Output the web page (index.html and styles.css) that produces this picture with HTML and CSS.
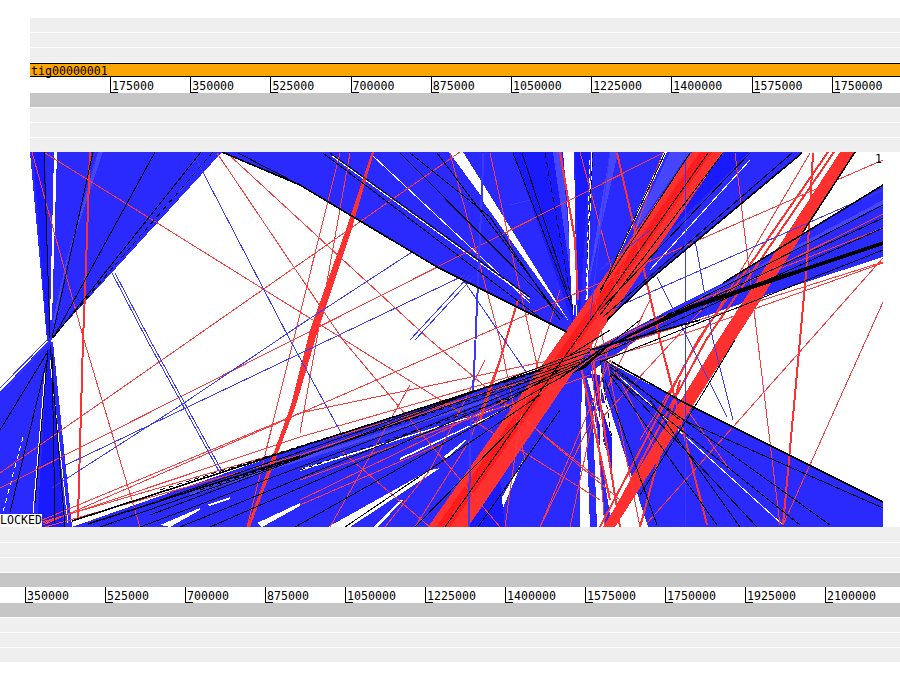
FILE: index.html
```html
<!DOCTYPE html>
<html lang="en">
<head>
<meta charset="utf-8">
<title>tig00000001</title>
<link rel="stylesheet" href="styles.css">
</head>
<body>
<main class="page">
  <section class="tracks tracks-inset">
    <div class="row"></div>
    <div class="row"></div>
    <div class="row"></div>
    <div class="contig">tig00000001</div>
    <div class="ruler ruler-top">
      <span class="tick">175000</span><span class="tick">350000</span><span class="tick">525000</span><span class="tick">700000</span><span class="tick">875000</span><span class="tick">1050000</span><span class="tick">1225000</span><span class="tick">1400000</span><span class="tick">1575000</span><span class="tick">1750000</span>
    </div>
    <div class="row row-grey"></div>
    <div class="row"></div>
    <div class="row"></div>
    <div class="row row-end"></div>
  </section>

  <section class="plot">
    <svg class="dots" width="883" height="375" viewBox="0 152 883 375" aria-hidden="true">
      <g class="blue">
        <polygon points="30,152 222,152 52,338 50,345 47,340"/>
        <polygon points="47,342 0,392 0,527 72,527 53,342"/>
        <polygon points="222,152 300,185 437,267 567,332 578,335 563,152"/>
        <polygon points="574,152 664,152 600,293 582,335 577,335"/>
        <polygon points="667,152 803,152 647,282 607,320 596,325 600,295"/>
        <polygon points="72,527 300,447 540,370 600,345 723,283 883,185 883,257 760,297 637,340 590,372 428,527"/>
        <polygon points="465,527 560,385 562,392 485,527"/>
        <polygon points="495,527 540,420 582,362 580,527"/>
        <polygon points="590,527 584,365 591,365 597,527"/>
        <polygon points="600,358 683,402 883,502 883,527 648,527 603,387"/>
        <polygon points="605,527 598,440 612,527"/>
      </g>
      <g class="blue-deep">
        <polygon points="33,152 45,152 50,335 47,335"/>
        <polygon points="48,350 37,527 64,527 52,350"/>
        <polygon points="513,152 563,152 576,333"/>
        <polygon points="575,152 590,152 579,330"/>
        <polygon points="587,373 600,448 600,375"/>
        <polygon points="601,387 612,430 612,470 603,440"/>
        <polygon points="725,152 750,152 640,260 620,285"/>
        <polygon points="468,527 500,480 505,527"/>
      </g>
      <g class="blue-pale">
        <polygon points="98,152 103,152 70,250 54,325 53,320 66,262"/>
        <polygon points="670,152 690,152 637,228 634,226"/>
        <polygon points="553,152 562,152 574,300"/>
        <polygon points="610,152 618,152 585,300"/>
        <polygon points="190,492 500,395 500,398 190,496"/>
        <polygon points="883,200 883,204 700,300 698,298"/>
      </g>
      <g class="blank">
        <polygon points="54,152 57,152 52,320 50,320"/>
        <polygon points="449,152 463,152 570,323 484,203 482,197"/>
        <polygon points="566,152 574,152 576,260 574,320 571,290"/>
        <polygon points="328,527 350,527 440,468 430,470"/>
        <polygon points="373,527 378,527 403,500 400,500"/>
        <polygon points="443,457 447,458 467,440 465,440"/>
        <polygon points="160,525 200,508 200,510 170,527"/>
        <polygon points="207,505 230,497 230,499 210,506"/>
        <polygon points="257,523 300,503 300,506 262,527"/>
        <polygon points="300,469 507,405 507,406 300,471"/>
        <polygon points="400,458 507,408 507,409 400,460"/>
        <polygon points="580,527 590,527 584,420 581,420"/>
        <polygon points="587,378 592,378 606,450 628,525 620,500"/>
        <polygon points="600,403 605,403 627,470 623,470"/>
      </g>
      <path class="blank-line" d="M50,360 68,523 M45,373 33,513 M592,152 587,300 M332,156 530,299 M372,155 530,303 M620,377 783,525 M750,160 650,270 M700,165 640,240 M800,160 650,280"/>
      <path class="blank-line dashed" d="M23,437 3,512 M590,160 586,300 M585,410 585,527"/>

      <g class="red">
        <polygon points="428,527 692,152 723,152 468,527"/>
        <polygon points="840,152 855,152 735,340 615,527 603,527 718,340"/>
        <polygon points="372,152 374,152 350,235 318,330 296,405 250,527 247,527 291,405 310,330 344,235"/>
        <polygon points="570,330 600,300 603,320 590,350 560,370 540,375"/>
      </g>
      <polygon class="red-deep" points="436,527 700,152 712,152 450,527"/>
      <path class="red-bold" d="M90,152 85,293 83,340 78,517 M813,153 807,263 800,340 783,525 M617,153 660,340 707,525 M828,152 698,340 600,527 M834,152 706,340 606,527 M575,340 610,500 M590,340 620,527 M560,152 575,240 578,300 M640,527 680,380 M518,300 500,360 480,420"/>
      <path class="red-mid" d="M0,473 460,152 M32,152 84,340 140,527 M45,153 300,312 600,500 M227,153 430,340 620,500 M217,153 343,340 500,527 M340,153 247,527 M0,488 663,153 M883,160 43,525 M883,302 783,525 M883,258 733,427 647,523 M883,263 667,340 42,522 M735,153 780,525 M810,153 700,340 640,440 M450,153 500,340 525,460 M490,153 520,290 545,400 M30,525 300,413 600,350 M43,523 300,437 620,345 M300,505 450,440 620,345 M45,527 300,455 610,350 M883,228 700,300 590,350 M883,214 740,285 600,352 M883,262 620,345 300,500 M560,290 520,420 505,527 M505,345 470,440 415,527 M485,360 430,470 385,527 M410,385 330,527 M650,300 540,527 M580,152 620,300 M595,300 640,527 M660,160 590,360 M720,290 600,420 M590,340 605,527 M350,153 300,433 M570,527 610,340 M300,480 590,375 M340,450 430,527 M500,400 600,480 M540,527 610,360 M610,360 660,460 M680,400 730,470"/>
      <path class="blue-line" d="M193,153 290,340 345,440 M112,273 147,340 220,473 M115,273 150,340 223,473 M66,465 465,275 M52,488 178,407 300,325 412,252 M0,388 47,340 M3,392 49,342 M685,152 685,527 M695,240 713,340 733,420 M657,277 727,417 M883,190 610,310 M483,153 475,340 470,440 468,527 M484,153 476,340 471,440 469,527 M410,340 470,275 M415,340 475,275 M460,275 535,385 M650,230 600,270 M510,205 530,200 M610,150 590,320"/>

      <path class="ink" d="M44,152 50,338 M93,152 52,338 M155,152 55,335 M201,152 53,338 M47,353 0,430 M47,360 10,512 M48,350 35,503 M52,353 55,523 M50,345 65,527 M238,153 300,185 M323,153 543,320 M330,153 530,297 M400,153 563,317 M410,153 490,217 560,320 M437,153 553,307 M513,153 573,310 M522,153 567,290 M690,153 600,290 M708,153 445,527 M723,153 600,315 M750,153 600,310 M792,153 603,317 M665,153 620,250 600,293 M855,152 803,232 M735,340 697,403 640,495 M883,218 600,350 M883,228 600,355 M883,250 600,362 M883,205 610,345 M590,352 160,500 M590,348 150,515 M585,358 100,527 M580,362 140,527 M575,366 180,527 M570,370 210,527 M560,378 295,527 M540,395 345,527 M520,420 415,527 M683,420 883,508 M610,367 830,525 M610,373 800,525 M610,370 757,527 M610,375 717,525 M605,380 657,525 M650,400 740,527 M605,360 680,420 M478,527 560,410 M500,405 560,370 M570,355 610,330 M590,360 640,320"/>
      <path class="ink dashed" d="M213,152 52,338 M545,153 573,310 M593,153 587,260 M160,490 560,365 M200,490 560,370 M650,320 850,255 M300,470 520,395 M600,360 612,440"/>
      <path class="ink-bold" d="M72,521 300,447 540,370 M222,152 300,185 437,267 567,332 M802,153 647,282 607,320 M883,185 723,283 M883,502 683,402 612,362 M855,152 803,232 M88,524 300,456 M590,350 700,320 M560,378 600,350"/>
      <polygon class="ink-fill" points="883,241 883,245 800,273 690,310 610,345 600,350 690,305 790,272"/>
      <polygon class="ink-fill" points="570,375 600,352 610,345 585,368"/>
    </svg>
    <span class="pin">1</span>
    <span class="locked">LOCKED</span>
  </section>

  <section class="tracks">
    <div class="row row-tall"></div>
    <div class="row"></div>
    <div class="row"></div>
    <div class="row row-grey row-end"></div>
    <div class="ruler ruler-bottom">
      <span class="tick">350000</span><span class="tick">525000</span><span class="tick">700000</span><span class="tick">875000</span><span class="tick">1050000</span><span class="tick">1225000</span><span class="tick">1400000</span><span class="tick">1575000</span><span class="tick">1750000</span><span class="tick">1925000</span><span class="tick">2100000</span>
    </div>
    <div class="row row-grey"></div>
    <div class="row"></div>
    <div class="row"></div>
    <div class="row row-end"></div>
  </section>
</main>
</body>
</html>
```
FILE: styles.css
```css
* { box-sizing: border-box; }

html, body {
  margin: 0;
  padding: 0;
  background: #fff;
}

body {
  font-family: "DejaVu Sans Mono", "Liberation Mono", monospace;
  font-size: 11.6px;
  color: #000;
  overflow: hidden;
}

.page {
  display: flex;
  flex-direction: column;
  width: 900px;
  height: 679px;
  padding-top: 18px;
}

.tracks {
  display: flex;
  flex-direction: column;
}

.tracks-inset { margin-left: 30px; }

.row {
  height: 14px;
  margin-bottom: 1px;
  background: #efefef;
}

.row-tall { height: 15px; }
.row-grey { background: #c6c6c6; }
.row-end { margin-bottom: 0; }

.contig {
  height: 14px;
  background: #ffa500;
  border-top: 1px solid #000;
  border-bottom: 1px solid #000;
  padding-left: 1px;
  line-height: 14px;
  white-space: nowrap;
}

.ruler {
  display: flex;
  height: 16px;
  overflow: hidden;
}

.ruler-top { padding-left: 80px; }
.ruler-bottom { padding-left: 25px; }

.tick {
  position: relative;
  flex: 0 0 auto;
  height: 16px;
  border-left: 1px solid #000;
  padding-left: 1px;
  line-height: 18px;
  white-space: nowrap;
}

.ruler-top .tick { width: 80.2px; }
.ruler-bottom .tick { width: 80px; }

.tick::after {
  content: "";
  position: absolute;
  left: 0;
  bottom: 0;
  width: 7px;
  height: 1px;
  background: #000;
}

.plot {
  position: relative;
  height: 375px;
}

.dots {
  display: block;
  shape-rendering: crispEdges;
}

.blue polygon { fill: #2a2aff; }
.blue-deep polygon { fill: #1a1aff; }
.blue-pale polygon { fill: #4646ff; }
.blank polygon { fill: #fff; }
.red polygon { fill: #ff3030; }
.red-deep { fill: #ff1c1c; }
.ink-fill { fill: #000; }

.blank-line, .red-bold, .red-mid, .blue-line, .ink, .ink-bold { fill: none; }

.blank-line { stroke: #fff; stroke-width: 1; }
.red-bold { stroke: #ff3030; stroke-width: 2; }
.red-mid { stroke: #ff3a3a; stroke-width: 1; }
.blue-line { stroke: #3a3aff; stroke-width: 1; }
.ink { stroke: #000; stroke-width: 1; }
.ink-bold { stroke: #000; stroke-width: 1.6; }
.dashed { stroke-dasharray: 5 4; }

.pin {
  position: absolute;
  top: 1px;
  left: 875px;
  width: 8px;
  overflow: hidden;
  line-height: 13px;
}

.locked {
  position: absolute;
  left: 0;
  bottom: 0;
  width: 42px;
  height: 13px;
  background: #fff;
  line-height: 13px;
  overflow: hidden;
  white-space: nowrap;
}
```
